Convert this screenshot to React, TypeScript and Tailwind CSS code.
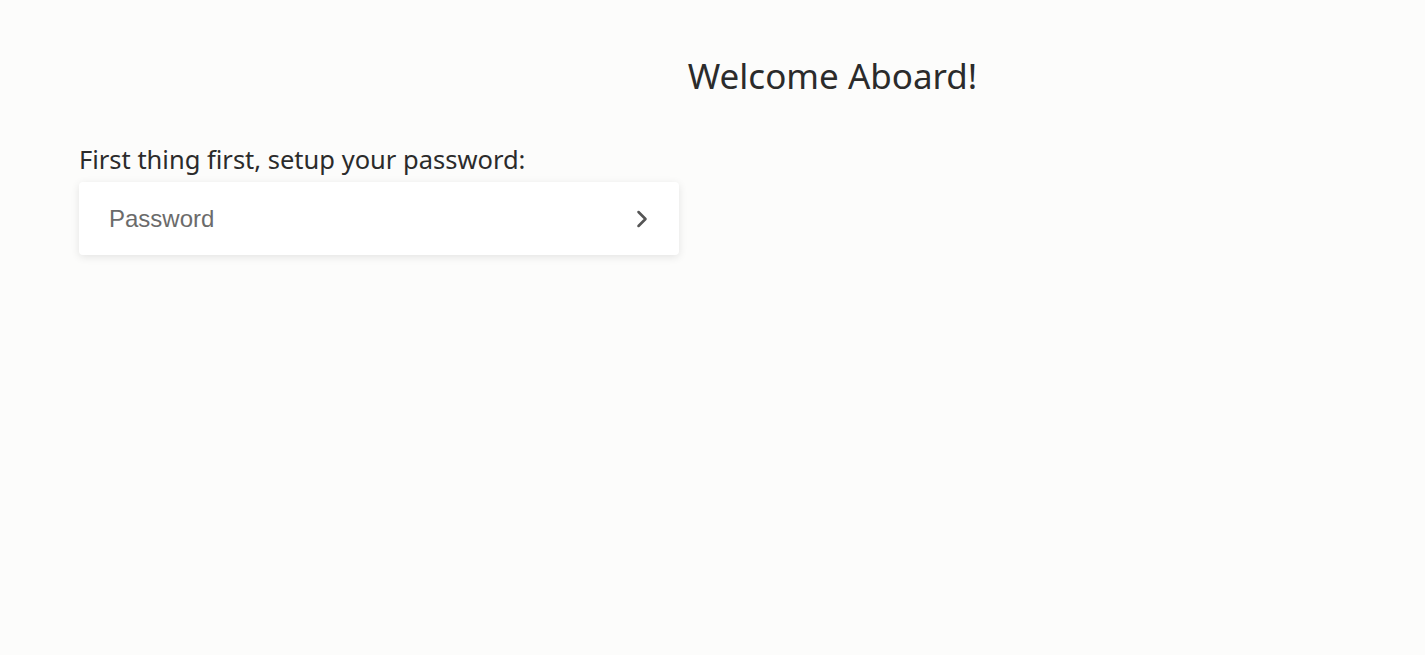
import { ChevronRight } from 'lucide-react'

export default function App() {
  return (
    <div className="min-h-screen bg-[#fcfcfb] text-[#2b2b2b] font-['Noto_Sans',sans-serif]">
      {/* Header */}
      <div className="flex justify-center pl-[240px] pt-[48px]">
        <h1 className="text-[35px] leading-[56px]">Welcome Aboard!</h1>
      </div>

      {/* Password step */}
      <div className="pl-[79px] pt-[38px]">
        <p className="text-[25.5px] leading-[34px]">First thing first, setup your password:</p>
        <div className="mt-[6px] flex h-[73px] w-[600px] items-center rounded bg-white pl-[30px] pr-[23px] shadow-[0_2px_8px_rgba(0,0,0,0.1)]">
          <input
            type="password"
            placeholder="Password"
            className="flex-1 bg-transparent font-['Liberation_Sans',sans-serif] text-[24px] outline-none placeholder:text-[#6b6b6b]"
          />
          <ChevronRight className="h-7 w-7 text-[#555]" strokeWidth={2.2} />
        </div>
      </div>
    </div>
  )
}
